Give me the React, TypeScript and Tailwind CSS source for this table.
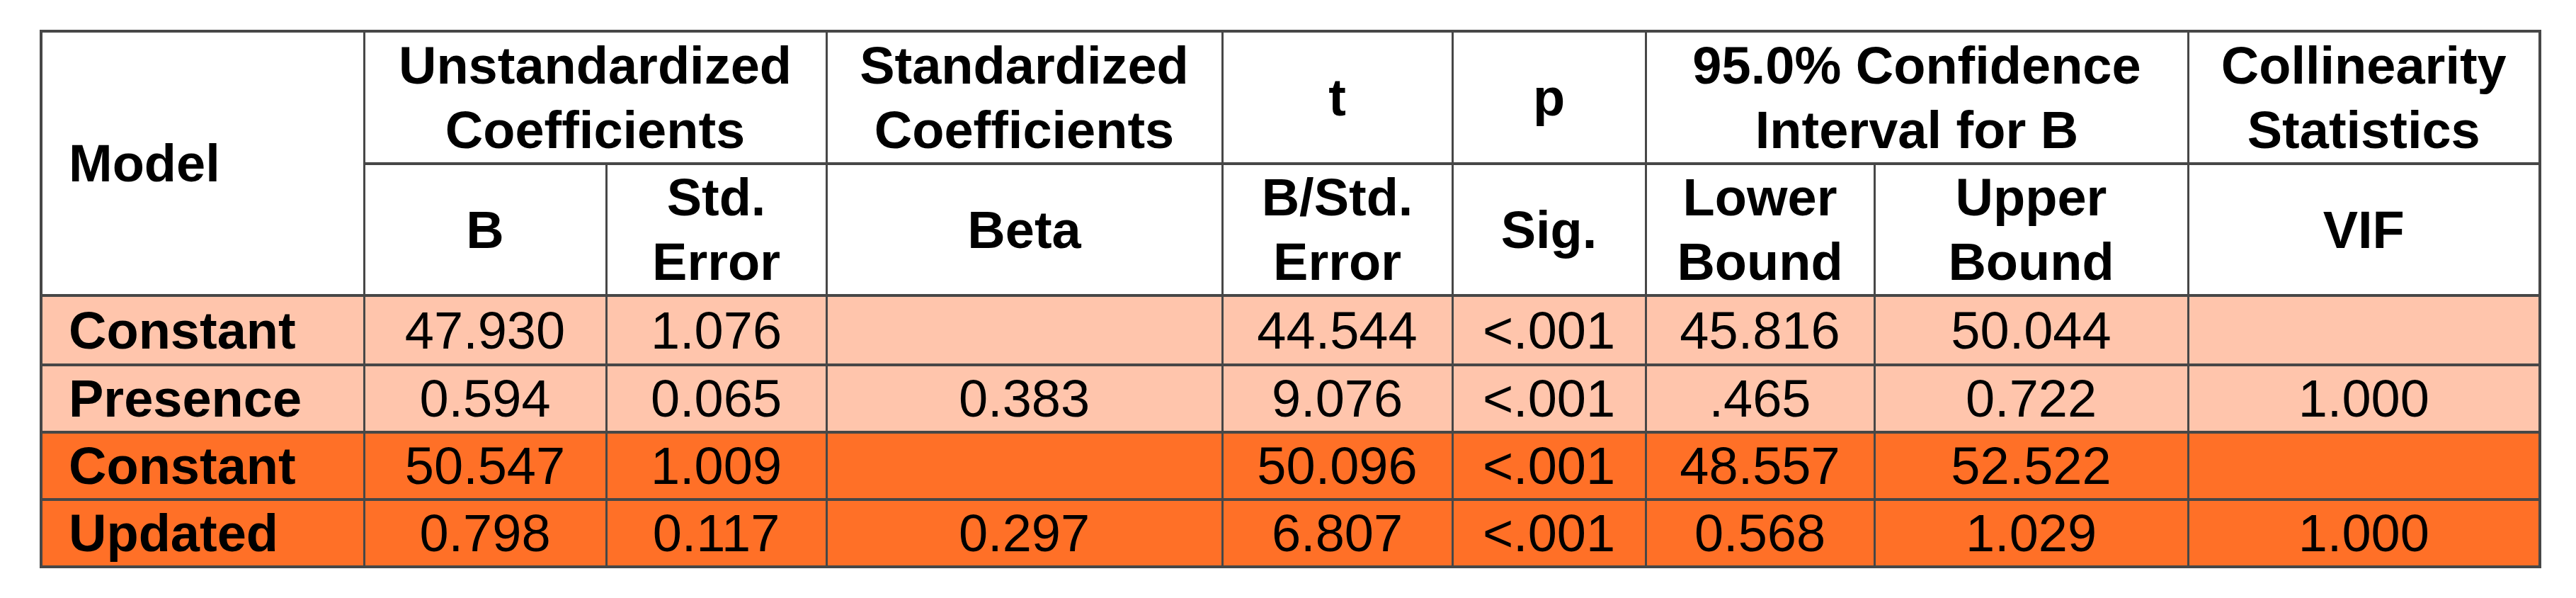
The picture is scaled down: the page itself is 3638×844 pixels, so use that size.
import React from 'react';

const LIGHT = 'bg-[#ffc5ac]';
const DARK = 'bg-[#ff7027]';

const rows = [
  { name: 'Constant', bg: LIGHT, vals: ['47.930', '1.076', '', '44.544', '<.001', '45.816', '50.044', ''] },
  { name: 'Presence', bg: LIGHT, vals: ['0.594', '0.065', '0.383', '9.076', '<.001', '.465', '0.722', '1.000'] },
  { name: 'Constant', bg: DARK, vals: ['50.547', '1.009', '', '50.096', '<.001', '48.557', '52.522', ''] },
  { name: 'Updated', bg: DARK, vals: ['0.798', '0.117', '0.297', '6.807', '<.001', '0.568', '1.029', '1.000'] },
];

const rowHeights = ['h-[98px]', 'h-[95px]', 'h-[95px]', 'h-[94px]'];

const cell = 'border-x-[3px] border-y-[4px] border-[#474747] p-0';

export default function App() {
  return (
    <div className="min-h-screen bg-white pl-[56px] pt-[42px] font-['Liberation_Sans',Arial,sans-serif] text-black">
      <table className="w-[3529px] table-fixed border-collapse text-[74px] leading-[91px]">
        <colgroup>
          <col className="w-[456px]" />
          <col className="w-[342px]" />
          <col className="w-[311px]" />
          <col className="w-[559px]" />
          <col className="w-[325px]" />
          <col className="w-[273px]" />
          <col className="w-[323px]" />
          <col className="w-[443px]" />
          <col className="w-[497px]" />
        </colgroup>
        <thead className="font-bold">
          <tr className="h-[187px]">
            <th rowSpan={2} className={`${cell} border-l-[4px] pl-[37px] text-left`}>Model</th>
            <th colSpan={2} className={cell}>Unstandardized<br />Coefficients</th>
            <th className={cell}>Standardized<br />Coefficients</th>
            <th className={cell}>t</th>
            <th className={cell}>p</th>
            <th colSpan={2} className={cell}>95.0% Confidence<br />Interval for B</th>
            <th className={`${cell} border-r-[4px]`}>Collinearity<br />Statistics</th>
          </tr>
          <tr className="h-[185px]">
            <th className={cell}>B</th>
            <th className={cell}>Std.<br />Error</th>
            <th className={cell}>Beta</th>
            <th className={cell}>B/Std.<br />Error</th>
            <th className={cell}>Sig.</th>
            <th className={cell}>Lower<br />Bound</th>
            <th className={cell}>Upper<br />Bound</th>
            <th className={`${cell} border-r-[4px]`}>VIF</th>
          </tr>
        </thead>
        <tbody>
          {rows.map((r, i) => (
            <tr key={i} className={`${r.bg} ${rowHeights[i]}`}>
              <td className={`${cell} border-l-[4px] pl-[37px] text-left font-bold`}>{r.name}</td>
              {r.vals.map((v, j) => (
                <td key={j} className={`${cell} text-center ${j === 7 ? 'border-r-[4px]' : ''}`}>{v}</td>
              ))}
            </tr>
          ))}
        </tbody>
      </table>
    </div>
  );
}
